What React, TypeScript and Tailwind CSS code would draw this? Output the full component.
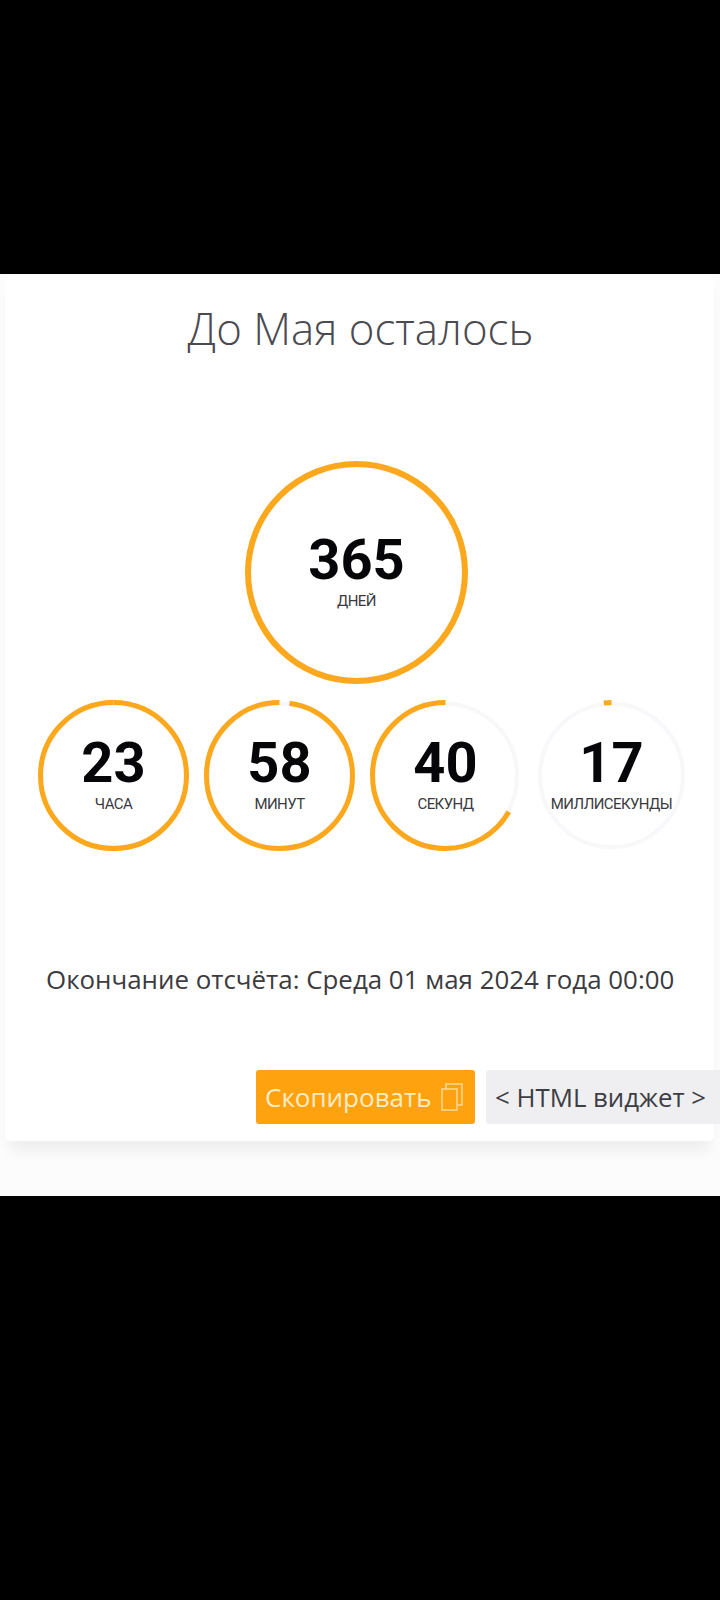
import React from "react";

function Ring({ size, stroke, fraction, value, label, labelClass }: { size: number; stroke: number; fraction: number; value: string; label: string; labelClass: string }) {
  const c = size / 2;
  const r = c - stroke / 2;
  return (
    <div className="relative flex shrink-0 flex-col items-center" style={{ width: size, height: size }}>
      <svg width={size} height={size} className="absolute inset-0" viewBox={`0 0 ${size} ${size}`}>
        <circle cx={c} cy={c} r={r - 1.5} fill="none" stroke="#f8f8fa" strokeWidth={stroke - 1} />
        <circle
          cx={c}
          cy={c}
          r={r}
          fill="none"
          stroke="#fba81c"
          strokeWidth={stroke}
          pathLength={1000}
          strokeDasharray={`${fraction * 1000} 1000`}
          transform={`rotate(-90 ${c} ${c}) scale(1 -1) translate(0 ${-size})`}
        />
      </svg>
      <div className={labelClass}>
        <span className="block text-[56px] font-bold leading-[58px] text-[#060608] [font-family:Roboto,sans-serif]">{value}</span>
        <span className="mt-[3px] block text-[15px] leading-[18px] tracking-[-0.6px] text-[#3a3a40] [font-family:Roboto,sans-serif]">{label}</span>
      </div>
    </div>
  );
}

export default function App() {
  return (
    <div className="flex h-[1600px] w-[720px] flex-col bg-black">
      <div className="mt-[274px] h-[922px] bg-[#fcfcfc] pt-[2px]">
        <div className="ml-[5px] flex h-[865px] w-[709px] flex-col rounded-[6px] bg-white shadow-[0_14px_14px_-4px_rgba(0,0,0,0.06)]">
          <h1 className="ml-[2px] mt-[20px] text-center text-[43.8px] font-light leading-[64px] text-[#4a4a50] [font-family:'Open_Sans',sans-serif]">
            До Мая осталось
          </h1>
          <div className="mt-[101px] flex justify-center pr-[6px]">
            <Ring size={223} stroke={6} fraction={1} value="365" label="ДНЕЙ" labelClass="pt-[70px] text-center" />
          </div>
          <div className="ml-[33px] mt-[16px] flex gap-[15px]">
            <Ring size={151} stroke={5} fraction={0.9995} value="23" label="ЧАСА" labelClass="pt-[34px] text-center" />
            <Ring size={151} stroke={5} fraction={0.978} value="58" label="МИНУТ" labelClass="pt-[34px] text-center" />
            <Ring size={151} stroke={5} fraction={0.667} value="40" label="СЕКУНД" labelClass="pt-[34px] text-center" />
            <Ring size={151} stroke={5} fraction={0.017} value="17" label="МИЛЛИСЕКУНДЫ" labelClass="pt-[34px] text-center whitespace-nowrap" />
          </div>
          <p className="ml-[41px] mt-[110px] whitespace-nowrap text-[25.9px] leading-[36px] text-[#3b3b40] [font-family:'Open_Sans',sans-serif]">
            Окончание отсчёта: Среда 01 мая 2024 года 00:00
          </p>
          <div className="ml-[251px] mt-[73px] flex items-start gap-[11px] [font-family:'Open_Sans',sans-serif]">
            <div className="flex h-[54px] w-[219px] shrink-0 items-center gap-[9px] rounded-[3px] bg-[#fea20f] pl-[9px] text-[26px] text-[#ffecc8]">
              <span>Скопировать</span>
              <svg width="24" height="30" viewBox="0 0 24 30" fill="none" stroke="#ffd894" strokeWidth="1.5">
                <rect x="1" y="7" width="15" height="21" />
                <path d="M5 7V2h16v21h-5" />
              </svg>
            </div>
            <div className="flex h-[54px] w-[234px] shrink-0 items-center whitespace-nowrap rounded-l-[3px] bg-[#efeff1] pl-[9px] text-[25.8px] text-[#3d3d44]">
              {"< HTML виджет >"}
            </div>
          </div>
        </div>
      </div>
    </div>
  );
}
